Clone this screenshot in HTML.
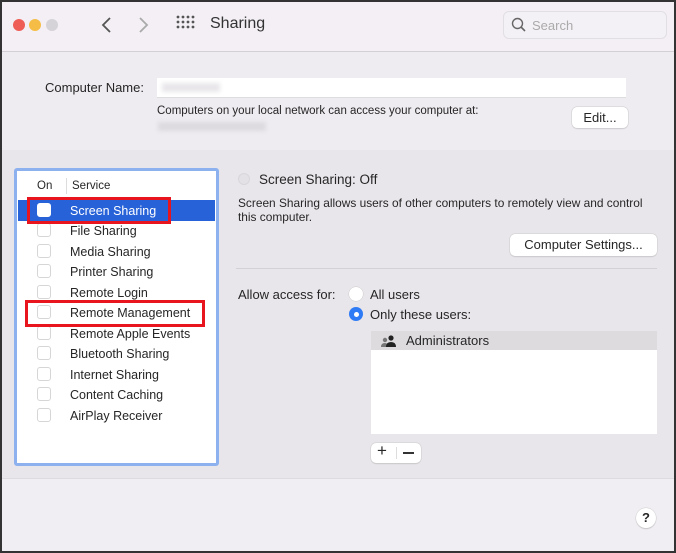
<!DOCTYPE html><html><head><style>
*{margin:0;padding:0;box-sizing:border-box}
body{width:676px;height:553px;position:relative;font-family:"Liberation Sans",sans-serif;color:#262626;overflow:hidden;background:#f1eef3}
.a{position:absolute}
.t{position:absolute;white-space:nowrap;font-size:12.5px}
.cb{position:absolute;left:37px;width:14px;height:14px;border:1px solid #d6d6d6;border-radius:3px;background:#fff}
.btn{position:absolute;background:#fff;border-radius:5px;box-shadow:0 0 0 .5px #ccc,0 1px 1px rgba(0,0,0,.15);font-size:13px;text-align:center}
</style></head><body>
<div class="a" style="left:0;top:0;width:676px;height:52px;background:#f3eff5;border-bottom:1px solid #d3d0d5"></div>
<div class="a" style="left:0;top:52px;width:676px;height:98px;background:#efecf1"></div>
<div class="a" style="left:0;top:150px;width:676px;height:329px;background:#e9e6eb;border-bottom:1px solid #dddae0"></div>
<div class="a" style="left:0;top:0;width:676px;height:553px;border:2px solid #333"></div>
<div class="a" style="left:13px;top:19px;width:12px;height:12px;border-radius:50%;background:#ee5e57"></div>
<div class="a" style="left:29px;top:19px;width:12px;height:12px;border-radius:50%;background:#f5bd45"></div>
<div class="a" style="left:46px;top:19px;width:12px;height:12px;border-radius:50%;background:#d5d3d7"></div>
<svg class="a" style="left:98px;top:14px" width="60" height="22"><path d="M12 4 L5 11 L12 18" stroke="#555" stroke-width="1.8" fill="none"/><path d="M42 4 L49 11 L42 18" stroke="#aaa" stroke-width="1.8" fill="none"/></svg>
<svg class="a" style="left:176px;top:15px" width="20" height="20" fill="#555"><circle cx="2" cy="2" r="1.4"/><circle cx="7" cy="2" r="1.4"/><circle cx="12" cy="2" r="1.4"/><circle cx="17" cy="2" r="1.4"/><circle cx="2" cy="7" r="1.4"/><circle cx="7" cy="7" r="1.4"/><circle cx="12" cy="7" r="1.4"/><circle cx="17" cy="7" r="1.4"/><circle cx="2" cy="12" r="1.4"/><circle cx="7" cy="12" r="1.4"/><circle cx="12" cy="12" r="1.4"/><circle cx="17" cy="12" r="1.4"/></svg>
<div class="t" style="left:210px;top:15px;font-size:16px;color:#333">Sharing</div>
<div class="a" style="left:503px;top:11px;width:164px;height:28px;border:1px solid #e2dfe4;border-radius:6px;background:#f4f1f6"></div>
<svg class="a" style="left:511px;top:17px" width="16" height="16"><circle cx="6.5" cy="6.5" r="5" stroke="#666" stroke-width="1.4" fill="none"/><path d="M10 10 L14 14" stroke="#666" stroke-width="1.6"/></svg>
<div class="t" style="left:532px;top:18px;font-size:13px;color:#aaa">Search</div>
<div class="t" style="left:45px;top:80px;font-size:13px">Computer Name:</div>
<div class="a" style="left:157px;top:78px;width:469px;height:19px;background:#fff;box-shadow:0 1px 0 #ddd"></div>
<div class="a" style="left:162px;top:83px;width:58px;height:9px;background:#e8e6ea;filter:blur(2px)"></div>
<div class="t" style="left:157px;top:105px;font-size:11.5px">Computers on your local network can access your computer at:</div>
<div class="a" style="left:158px;top:122px;width:108px;height:9px;background:#dcdadf;filter:blur(2px)"></div>
<div class="btn" style="left:572px;top:107px;width:56px;height:21px;line-height:21px">Edit...</div>
<div class="a" style="left:14px;top:168px;width:205px;height:298px;border:3px solid #8db1ef;border-radius:3px;background:#fff"></div>
<div class="t" style="left:37px;top:180px;font-size:11.5px">On</div>
<div class="a" style="left:66px;top:178px;width:1px;height:16px;background:#ddd"></div>
<div class="t" style="left:72px;top:180px;font-size:11.5px">Service</div>
<div class="a" style="left:18px;top:200px;width:197px;height:21px;background:#2862d8"></div>
<div class="cb" style="top:203px;border-color:#fff"></div><div class="t" style="left:70px;top:204px;color:#fff">Screen Sharing</div>
<div class="cb" style="top:223px"></div><div class="t" style="left:70px;top:224px">File Sharing</div>
<div class="cb" style="top:244px"></div><div class="t" style="left:70px;top:245px">Media Sharing</div>
<div class="cb" style="top:264px"></div><div class="t" style="left:70px;top:265px">Printer Sharing</div>
<div class="cb" style="top:285px"></div><div class="t" style="left:70px;top:286px">Remote Login</div>
<div class="cb" style="top:305px"></div><div class="t" style="left:70px;top:306px">Remote Management</div>
<div class="cb" style="top:326px"></div><div class="t" style="left:70px;top:327px">Remote Apple Events</div>
<div class="cb" style="top:346px"></div><div class="t" style="left:70px;top:347px">Bluetooth Sharing</div>
<div class="cb" style="top:367px"></div><div class="t" style="left:70px;top:368px">Internet Sharing</div>
<div class="cb" style="top:387px"></div><div class="t" style="left:70px;top:388px">Content Caching</div>
<div class="cb" style="top:408px"></div><div class="t" style="left:70px;top:409px">AirPlay Receiver</div>
<div class="a" style="left:27px;top:197px;width:144px;height:27px;border:3px solid #e8141e"></div>
<div class="a" style="left:25px;top:300px;width:180px;height:27px;border:3px solid #e8141e"></div>
<div class="a" style="left:238px;top:173px;width:12px;height:12px;border-radius:50%;background:#e3e1e5;border:1px solid #d8d6da"></div>
<div class="t" style="left:259px;top:172px;font-size:13.5px">Screen Sharing: Off</div>
<div class="t" style="left:238px;top:196px;font-size:11.9px;line-height:14px">Screen Sharing allows users of other computers to remotely view and control<br>this computer.</div>
<div class="btn" style="left:510px;top:234px;width:147px;height:22px;line-height:22px">Computer Settings...</div>
<div class="a" style="left:236px;top:268px;width:421px;height:1px;background:#d4d1d6"></div>
<div class="t" style="left:238px;top:287px;font-size:13px">Allow access for:</div>
<div class="a" style="left:349px;top:287px;width:14px;height:14px;border-radius:50%;background:#fff;box-shadow:0 0 0 .5px #ccc"></div>
<div class="t" style="left:370px;top:287px;font-size:13px">All users</div>
<div class="a" style="left:349px;top:307px;width:14px;height:14px;border-radius:50%;background:#2f7bf5"></div>
<div class="a" style="left:354px;top:312px;width:5px;height:5px;border-radius:50%;background:#fff"></div>
<div class="t" style="left:370px;top:307px;font-size:13px">Only these users:</div>
<div class="a" style="left:371px;top:331px;width:286px;height:103px;background:#fff"></div>
<div class="a" style="left:371px;top:331px;width:286px;height:19px;background:#dddbde"></div>
<svg class="a" style="left:380px;top:334px" width="18" height="14" fill="#222"><circle cx="5" cy="6" r="2.2" fill="#777"/><path d="M1 13 Q1 9 5 9 Q8 9 8 13Z" fill="#777"/><circle cx="11" cy="4" r="2.6"/><path d="M6 13 Q6 8 11 8 Q16 8 16 13Z"/></svg>
<div class="t" style="left:406px;top:333px;font-size:13px">Administrators</div>
<div class="btn" style="left:371px;top:443px;width:50px;height:20px"></div>
<div class="t" style="left:377px;top:441px;font-size:17px">+</div>
<div class="a" style="left:396px;top:447px;width:1px;height:12px;background:#ddd"></div>
<div class="a" style="left:403px;top:452px;width:11px;height:1.5px;background:#333"></div>
<div class="a" style="left:636px;top:508px;width:20px;height:20px;border-radius:50%;background:#fff;box-shadow:0 0 0 .5px #ccc,0 1px 1px rgba(0,0,0,.2);text-align:center;line-height:20px;font-size:13px;font-weight:bold">?</div>
</body></html>
